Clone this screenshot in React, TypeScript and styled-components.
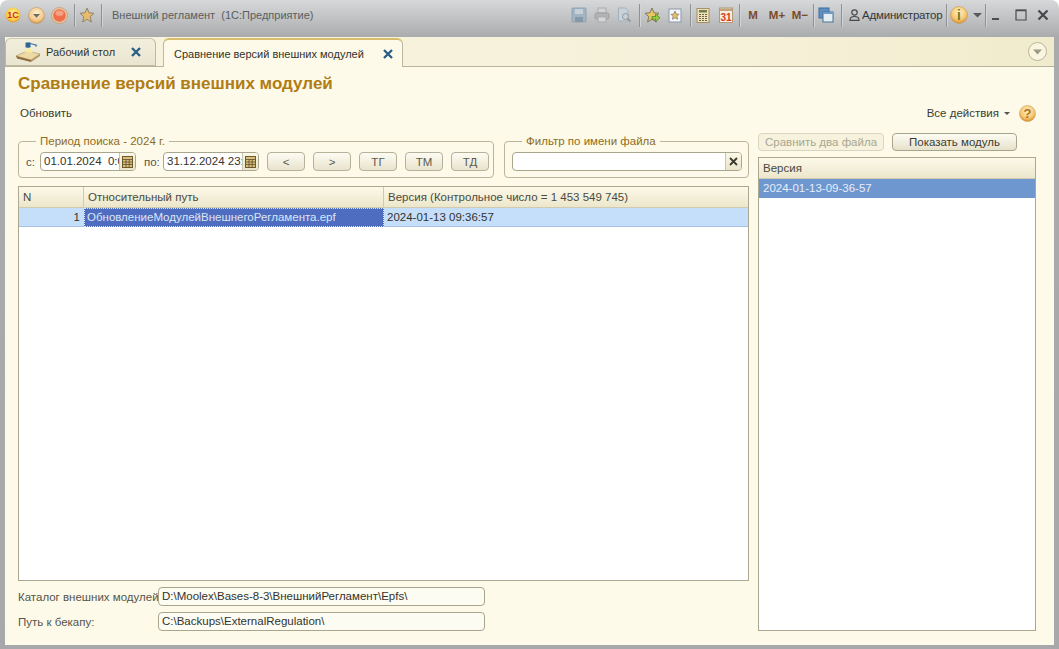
import styled, { createGlobalStyle } from "styled-components";

const GlobalStyle = createGlobalStyle`
  html, body {
    margin: 0;
    padding: 0;
    background: #ffffff;
  }
  * {
    box-sizing: border-box;
  }
`;

const Window = styled.div`
  width: 1059px;
  height: 649px;
  display: flex;
  flex-direction: column;
  overflow: hidden;
  border-radius: 8px 8px 0 0;
  font-family: "Liberation Sans", Arial, sans-serif;
  font-size: 11.5px;
  color: #3c3c34;
  background: linear-gradient(180deg, #d6d8d9 0, #c3c5c7 16px, #a9abad 37px, #a6a8aa 100%);
`;

const TitleBar = styled.div`
  height: 37px;
  flex: none;
  display: flex;
  align-items: center;
  padding-bottom: 7px;
`;

const Group = styled.div<{ $left?: number }>`
  display: flex;
  align-items: center;
  height: 30px;
  margin-left: ${(p) => p.$left ?? 0}px;
`;

const Slot = styled.div<{ $w: number; $left?: number }>`
  width: ${(p) => p.$w}px;
  margin-left: ${(p) => p.$left ?? 0}px;
  flex: none;
  display: flex;
  align-items: center;
  justify-content: center;
`;

const Sep = styled.div<{ $left: number }>`
  width: 1px;
  height: 23px;
  flex: none;
  margin-left: ${(p) => p.$left}px;
  background: #8f9294;
  box-shadow: 1px 0 0 #d2d4d5;
`;

const WindowTitle = styled.div`
  margin-left: 10px;
  color: #595e61;
  font-size: 11px;
  white-space: pre;
`;

const Memo = styled.div<{ $w: number }>`
  width: ${(p) => p.$w}px;
  flex: none;
  text-align: center;
  font-size: 11.5px;
  font-weight: 700;
  color: #7c4a28;
`;

const UserName = styled.div`
  width: 84px;
  flex: none;
  font-size: 11.5px;
  letter-spacing: -0.2px;
  color: #33373a;
`;

const Panel = styled.div`
  flex: 1;
  min-height: 0;
  margin: 0 5px 4px;
  display: flex;
  flex-direction: column;
  background: #fdfae9;
`;

const TabStrip = styled.div`
  height: 30px;
  flex: none;
  display: flex;
  align-items: flex-end;
  padding-left: 0;
  margin-top: 0;
  background: linear-gradient(90deg, #f8f3dd, #f6f1d9 70%, #f1ebcd);
  border-bottom: 1px solid #b8b39b;
  position: relative;
`;

const Tab = styled.div<{ $active?: boolean; $w: number; $left?: number }>`
  width: ${(p) => p.$w}px;
  height: ${(p) => (p.$active ? 29 : 28)}px;
  margin-left: ${(p) => p.$left ?? 0}px;
  margin-bottom: ${(p) => (p.$active ? -1 : 0)}px;
  flex: none;
  display: flex;
  align-items: center;
  border: 1px solid #bdb89f;
  border-bottom: ${(p) => (p.$active ? "none" : "1px solid #bdb89f")};
  border-top: ${(p) => (p.$active ? "2px solid #d8bd6d" : "1px solid #c9c5ae")};
  border-radius: 6px 6px 0 0;
  background: ${(p) => (p.$active ? "#fdfae9" : "linear-gradient(180deg, #f2efdd, #e9e5cf)")};
  color: #33332c;
  font-size: 11px;
`;

const TabLabel = styled.div<{ $left: number; $w: number }>`
  margin-left: ${(p) => p.$left}px;
  width: ${(p) => p.$w}px;
  white-space: nowrap;
`;

const StripMenu = styled.div`
  position: absolute;
  right: 7px;
  top: 5px;
  width: 19px;
  height: 19px;
  border-radius: 50%;
  border: 1px solid #b9b59d;
  background: #f9f5df;
  display: flex;
  align-items: center;
  justify-content: center;
`;

const Content = styled.div`
  flex: 1;
  min-height: 0;
  display: flex;
  flex-direction: column;
  padding: 8px 18px 14px 13px;
`;

const Heading = styled.h1`
  margin: 0;
  height: 18px;
  line-height: 18px;
  font-size: 17px;
  font-weight: 700;
  color: #b07c14;
  white-space: nowrap;
`;

const Toolbar = styled.div`
  height: 20px;
  margin-top: 10px;
  flex: none;
  display: flex;
  align-items: center;
  justify-content: space-between;
  padding-left: 2px;
`;

const ToolbarRight = styled.div`
  display: flex;
  align-items: center;
`;

const ActionsLabel = styled.div`
  color: #3c3c34;
`;

const Caret = styled.div`
  width: 0;
  height: 0;
  margin: 1px 0 0 5px;
  border-left: 3px solid transparent;
  border-right: 3px solid transparent;
  border-top: 3px solid #55554a;
`;

const HelpWrap = styled.div`
  margin-left: 9px;
  display: flex;
`;

const Body = styled.div`
  flex: 1;
  min-height: 0;
  margin-top: 10px;
  display: flex;
  gap: 9px;
`;

const LeftColumn = styled.div`
  width: 731px;
  flex: none;
  display: flex;
  flex-direction: column;
  padding-top: 2px;
`;

const RightColumn = styled.div`
  flex: 1;
  min-width: 0;
  display: flex;
  flex-direction: column;
`;

const FilterRow = styled.div`
  display: flex;
  gap: 10px;
  flex: none;
`;

const GroupBox = styled.fieldset<{ $w: number }>`
  width: ${(p) => p.$w}px;
  height: 43px;
  flex: none;
  margin: 0;
  padding: 0 7px;
  border: 1px solid #bab59d;
  border-radius: 4px;
  display: flex;
  align-items: center;
  min-inline-size: 0;
`;

const BoxTitle = styled.legend`
  margin-left: 10px;
  padding: 0 4px;
  line-height: 12px;
  font-size: 11.5px;
  color: #8d6c22;
`;

const FieldRow = styled.div`
  display: flex;
  align-items: center;
  margin-top: -1px;
`;

const FieldLabel = styled.span<{ $w: number }>`
  width: ${(p) => p.$w}px;
  flex: none;
  color: #55554a;
`;

const InputFrame = styled.div<{ $w: number }>`
  width: ${(p) => p.$w}px;
  height: 19px;
  flex: none;
  display: flex;
  border: 1px solid #aaa58d;
  border-radius: 4px;
  background: #ffffff;
  overflow: hidden;
`;

const InputText = styled.div`
  flex: 1;
  min-width: 0;
  padding-left: 3px;
  line-height: 17px;
  white-space: pre;
  overflow: hidden;
  color: #33332c;
`;

const InputButton = styled.div`
  width: 16px;
  flex: none;
  display: flex;
  align-items: center;
  justify-content: center;
  border-left: 1px solid #c9c4ab;
  background: linear-gradient(180deg, #fbf8e8, #e9e4ca);
`;

const SmallButton = styled.div<{ $left: number }>`
  width: 38px;
  height: 19px;
  flex: none;
  margin-left: ${(p) => p.$left}px;
  display: flex;
  align-items: center;
  justify-content: center;
  border: 1px solid #b6b199;
  border-radius: 4px;
  background: linear-gradient(180deg, #fdfcf3, #e8e3cd);
  color: #5a5a4e;
`;

const DataTable = styled.div`
  flex: 1;
  min-height: 0;
  margin-top: 8px;
  border: 1px solid #aca78f;
  background: #ffffff;
`;

const TableRow = styled.div`
  display: grid;
  grid-template-columns: 65px 300px 1fr;
`;

const HeadCell = styled.div`
  height: 21px;
  padding-left: 4px;
  line-height: 20px;
  background: linear-gradient(180deg, #fcf9e9, #ece6cb);
  border-bottom: 1px solid #cfcab0;
  border-right: 1px solid #cfcab0;
  color: #4a4a3e;
  white-space: nowrap;

  &:last-child {
    border-right: none;
  }
`;

const Cell = styled.div<{ $align?: string; $current?: boolean }>`
  height: 19px;
  padding: 0 4px 0 3px;
  line-height: 18px;
  text-align: ${(p) => p.$align ?? "left"};
  white-space: nowrap;
  background: ${(p) => (p.$current ? "#4e6cc0" : "#c5dffb")};
  color: ${(p) => (p.$current ? "#dce6f6" : "#33332c")};
  border-bottom: ${(p) => (p.$current ? "none" : "1px solid #a8c4e2")};
  outline: ${(p) => (p.$current ? "1px dotted #dfe8f8" : "none")};
  outline-offset: -1px;
`;

const PathRow = styled.div<{ $top: number }>`
  display: flex;
  align-items: center;
  flex: none;
  margin-top: ${(p) => p.$top}px;
`;

const PathLabel = styled.div`
  width: 140px;
  flex: none;
  color: #55554a;
  white-space: nowrap;
`;

const PathField = styled.div`
  width: 327px;
  height: 19px;
  flex: none;
  padding-left: 3px;
  line-height: 17px;
  border: 1px solid #aaa58d;
  border-radius: 4px;
  background: #fdfcf3;
  color: #33332c;
  white-space: nowrap;
`;

const ButtonRow = styled.div`
  display: flex;
  gap: 8px;
  flex: none;
`;

const ActionButton = styled.div<{ $disabled?: boolean }>`
  width: ${(p) => (p.$disabled ? 126 : 125)}px;
  height: 18px;
  display: flex;
  align-items: center;
  justify-content: center;
  border: 1px solid ${(p) => (p.$disabled ? "#d9d5bf" : "#a9a48c")};
  border-radius: 4px;
  background: ${(p) =>
    p.$disabled ? "#f6f2de" : "linear-gradient(180deg, #fdfcf3, #e6e1ca)"};
  color: ${(p) => (p.$disabled ? "#a9a78f" : "#3c3c34")};
`;

const VersionList = styled.div`
  flex: 1;
  min-height: 0;
  margin-top: 6px;
  border: 1px solid #aca78f;
  background: #ffffff;
`;

const ListHead = styled.div`
  height: 21px;
  padding-left: 4px;
  line-height: 20px;
  background: linear-gradient(180deg, #fcf9e9, #ece6cb);
  border-bottom: 1px solid #cfcab0;
  color: #4a4a3e;
`;

const ListItem = styled.div`
  height: 19px;
  padding-left: 4px;
  line-height: 18px;
  background: #6f97cf;
  color: #e6eef9;
`;

const STAR = "8,1 10,5.8 15,6.3 11.2,9.7 12.4,15 8,12.2 3.6,15 4.8,9.7 1,6.3 6,5.8";

function Logo1C() {
  return (
    <svg width="16" height="16" viewBox="0 0 16 16">
      <defs>
        <radialGradient id="logoFill" cx="0.5" cy="0.4" r="0.6">
          <stop offset="0" stopColor="#fff3a0" />
          <stop offset="0.7" stopColor="#f8cf45" />
          <stop offset="1" stopColor="#e8953a" />
        </radialGradient>
      </defs>
      <circle cx="8" cy="8" r="7.5" fill="url(#logoFill)" />
      <text x="8" y="11" textAnchor="middle" fontSize="9" fontWeight="700" fill="#d42a1a" fontFamily="Liberation Sans">
        1С
      </text>
    </svg>
  );
}

function MenuCircle() {
  return (
    <svg width="17" height="17" viewBox="0 0 17 17">
      <defs>
        <radialGradient id="menuFill" cx="0.5" cy="0.35" r="0.65">
          <stop offset="0" stopColor="#fdf0cf" />
          <stop offset="0.7" stopColor="#f3c98b" />
          <stop offset="1" stopColor="#d2933f" />
        </radialGradient>
      </defs>
      <circle cx="8.5" cy="8.5" r="8" fill="url(#menuFill)" stroke="#b99566" strokeWidth="0.6" />
      <path d="M5 7h7l-3.500 3.800z" fill="#6f6a5e" />
    </svg>
  );
}

function RedCircle() {
  return (
    <svg width="17" height="17" viewBox="0 0 17 17">
      <circle cx="8.5" cy="8.5" r="8" fill="#e9c39d" stroke="#b99566" strokeWidth="0.6" />
      <circle cx="8.5" cy="8.5" r="6.2" fill="#ef6f4c" />
      <ellipse cx="8.5" cy="6.2" rx="4" ry="2.6" fill="#f6a184" />
    </svg>
  );
}

function FavStar() {
  return (
    <svg width="16" height="16" viewBox="0 0 16 16">
      <polygon points={STAR} fill="#eabb6a" stroke="#8e8571" strokeWidth="1" />
    </svg>
  );
}

function CloseX({ size = 12 }: { size?: number }) {
  return (
    <svg width={size} height={size} viewBox="0 0 12 12">
      <path d="M2 2l8 8M10 2l-8 8" stroke="#275d86" strokeWidth="2.300" fill="none" />
    </svg>
  );
}

function DeskIcon() {
  return (
    <svg width="26" height="22" viewBox="0 0 26 22">
      <path d="M1 15l11-5 13 3-9 6z" fill="#ecd9a6" stroke="#a98f5e" strokeWidth="0.6" />
      <path d="M1 15l15 4v2L2 17.500z" fill="#8e6b3a" />
      <path d="M16 19l9-6v2l-9 6z" fill="#b89565" />
      <path d="M9 11l3-4h3l3 5z" fill="#f6ee9a" opacity="0.9" />
      <path d="M13 7V2M13 2l8 2" stroke="#3e6f9e" strokeWidth="1.200" fill="none" />
      <path d="M10.500 1.500h5v5h-5z" fill="#2f6599" />
      <circle cx="21" cy="4.500" r="1.200" fill="#6b93b8" />
    </svg>
  );
}

function SaveIcon() {
  return (
    <svg width="16" height="16" viewBox="0 0 16 16">
      <rect x="1" y="1" width="14" height="14" rx="1" fill="#a3b4c2" stroke="#8fa2b2" />
      <rect x="4" y="2" width="8" height="5" fill="#c6d0d8" />
      <rect x="4" y="10" width="8" height="5" fill="#8599a9" />
    </svg>
  );
}

function PrintIcon() {
  return (
    <svg width="16" height="16" viewBox="0 0 16 16">
      <rect x="4" y="1" width="8" height="5" fill="#d2d3d3" stroke="#a9adaf" />
      <rect x="1" y="6" width="14" height="6" rx="1.500" fill="#b3b3b1" stroke="#9c9fa0" />
      <rect x="4" y="10" width="8" height="5" fill="#d6d6d4" stroke="#a9adaf" />
    </svg>
  );
}

function PreviewIcon() {
  return (
    <svg width="16" height="16" viewBox="0 0 16 16">
      <path d="M2.500 1h7l2.500 2.500V14h-9.500z" fill="#c9d2d8" stroke="#a2b1bc" />
      <circle cx="9.500" cy="9.500" r="3" fill="#c7ced2" stroke="#8f9ca5" />
      <path d="M11.500 11.500l3 3" stroke="#8a8f92" strokeWidth="1.500" />
    </svg>
  );
}

function StarArrow() {
  return (
    <svg width="17" height="16" viewBox="0 0 17 16">
      <polygon points={STAR} fill="#eac466" stroke="#7e7a5c" strokeWidth="1" />
      <path d="M8 9.500h3.500V7l4.500 3.800-4.500 3.800v-2.500H8z" fill="#8fd13c" stroke="#4d7f25" strokeWidth="0.700" />
    </svg>
  );
}

function StarDoc() {
  return (
    <svg width="14" height="15" viewBox="0 0 14 15">
      <rect x="1" y="1" width="12" height="13" fill="#f4f6f8" stroke="#8a9aa8" />
      <polygon points="7,3 8.200,6 11,6.300 9,8.300 9.600,11.300 7,9.800 4.400,11.300 5,8.300 3,6.300 5.800,6" fill="#e6bd6b" stroke="#7d7a6a" strokeWidth="0.700" />
    </svg>
  );
}

function CalcIcon() {
  return (
    <svg width="14" height="15" viewBox="0 0 14 15">
      <rect x="1" y="0.500" width="12" height="14" fill="#efe2bd" stroke="#a68f63" />
      <rect x="3" y="2" width="8" height="2.500" fill="#6d7f4b" />
      <path d="M3 6.500h8M3 8.500h8M3 10.500h8M3 12.500h8" stroke="#6f6542" strokeDasharray="2 1" strokeWidth="1.200" />
    </svg>
  );
}

function CalendarIcon() {
  return (
    <svg width="14" height="16" viewBox="0 0 14 16">
      <rect x="0.500" y="1" width="13" height="14.500" fill="#f7eedd" stroke="#b09a78" />
      <rect x="1" y="1.500" width="12" height="2.500" fill="#c2a27a" />
      <text x="7" y="13.500" textAnchor="middle" fontSize="10" fontWeight="700" fill="#d43c24" fontFamily="Liberation Sans">
        31
      </text>
    </svg>
  );
}

function WindowsIcon() {
  return (
    <svg width="16" height="16" viewBox="0 0 16 16">
      <rect x="1" y="1" width="10" height="10" fill="#5f8fc2" stroke="#3f6f9f" />
      <rect x="5" y="5" width="10" height="10" fill="#e4edf4" stroke="#49708f" />
      <rect x="5" y="5" width="10" height="2" fill="#6f9ac6" />
    </svg>
  );
}

function UserIcon() {
  return (
    <svg width="11" height="12" viewBox="0 0 11 12">
      <circle cx="5.500" cy="3.500" r="2.700" fill="none" stroke="#45494c" strokeWidth="1.200" />
      <path d="M1 11.300c0-3 2-3.800 4.500-3.800s4.500.8 4.500 3.800z" fill="none" stroke="#45494c" strokeWidth="1.200" />
    </svg>
  );
}

function OrangeBadge({ mark, size, color }: { mark: string; size: number; color: string }) {
  return (
    <svg width={size} height={size} viewBox="0 0 17 17">
      <defs>
        <radialGradient id={`badge${mark === "i" ? "I" : "Q"}`} cx="0.5" cy="0.35" r="0.65">
          <stop offset="0" stopColor="#fff0c4" />
          <stop offset="0.65" stopColor="#f7c873" />
          <stop offset="1" stopColor="#d98e2d" />
        </radialGradient>
      </defs>
      <circle cx="8.500" cy="8.500" r="8" fill={`url(#badge${mark === "i" ? "I" : "Q"})`} stroke="#c79c5a" strokeWidth="0.600" />
      <text x="8.500" y="13" textAnchor="middle" fontSize="13" fontWeight="700" fill={color} fontFamily="Liberation Sans">
        {mark}
      </text>
    </svg>
  );
}

function SmallArrow() {
  return (
    <svg width="9" height="5" viewBox="0 0 9 5">
      <path d="M0 0h9L4.500 4.500z" fill="#565a5c" />
    </svg>
  );
}

function MinimizeIcon() {
  return (
    <svg width="12" height="12" viewBox="0 0 12 12">
      <rect x="2" y="9" width="7" height="2" fill="#4a4e51" />
    </svg>
  );
}

function MaximizeIcon() {
  return (
    <svg width="12" height="12" viewBox="0 0 12 12">
      <path d="M1 1h10v10H1z" fill="none" stroke="#4a4e51" strokeWidth="1.200" />
      <path d="M1 1.500h10" stroke="#4a4e51" strokeWidth="1.600" />
    </svg>
  );
}

function WindowCloseIcon() {
  return (
    <svg width="12" height="12" viewBox="0 0 12 12">
      <path d="M1.500 1.500l9 9M10.500 1.500l-9 9" stroke="#44484b" strokeWidth="2.200" />
    </svg>
  );
}

function DateGrid() {
  return (
    <svg width="11" height="12" viewBox="0 0 11 12">
      <rect x="0.500" y="0.500" width="10" height="11" fill="#d9bf7f" stroke="#6e5a2a" />
      <path d="M0.500 3.500h10M0.500 6h10M0.500 8.500h10M4 3.500v8M7.200 3.500v8" stroke="#5f4e26" strokeWidth="0.800" />
    </svg>
  );
}

function ClearX() {
  return (
    <svg width="9" height="9" viewBox="0 0 9 9">
      <path d="M1 1l7 7M8 1l-7 7" stroke="#3d3a2c" strokeWidth="1.800" />
    </svg>
  );
}

function TriangleDown() {
  return (
    <svg width="9" height="6" viewBox="0 0 9 6">
      <path d="M0 0.500h9L4.500 5.500z" fill="#9d9a86" />
    </svg>
  );
}

export default function App() {
  return (
    <>
      <GlobalStyle />
      <Window>
        <TitleBar>
          <Group $left={5}>
            <Slot $w={16}>
              <Logo1C />
            </Slot>
            <Slot $w={17} $left={7}>
              <MenuCircle />
            </Slot>
            <Slot $w={17} $left={6}>
              <RedCircle />
            </Slot>
            <Sep $left={6} />
            <Slot $w={16} $left={4}>
              <FavStar />
            </Slot>
            <Sep $left={6} />
            <WindowTitle>Внешний регламент  (1С:Предприятие)</WindowTitle>
          </Group>
          <Group style={{ marginLeft: "auto" }}>
            <Slot $w={22}>
              <SaveIcon />
            </Slot>
            <Slot $w={23}>
              <PrintIcon />
            </Slot>
            <Slot $w={22}>
              <PreviewIcon />
            </Slot>
            <Sep $left={4} />
            <Slot $w={22} $left={1}>
              <StarArrow />
            </Slot>
            <Slot $w={23}>
              <StarDoc />
            </Slot>
            <Sep $left={4} />
            <Slot $w={22} $left={1}>
              <CalcIcon />
            </Slot>
            <Slot $w={23}>
              <CalendarIcon />
            </Slot>
            <Sep $left={2} />
            <Memo $w={24} style={{ marginLeft: 1 }}>
              M
            </Memo>
            <Memo $w={24}>M+</Memo>
            <Memo $w={22}>M−</Memo>
            <Sep $left={2} />
            <Slot $w={22} $left={1}>
              <WindowsIcon />
            </Slot>
            <Sep $left={4} />
            <Slot $w={16} $left={4}>
              <UserIcon />
            </Slot>
            <UserName>Администратор</UserName>
            <Sep $left={0} />
            <Slot $w={22} $left={1}>
              <OrangeBadge mark="i" size={18} color="#6d7a1f" />
            </Slot>
            <Slot $w={14}>
              <SmallArrow />
            </Slot>
            <Sep $left={1} />
            <Slot $w={20}>
              <MinimizeIcon />
            </Slot>
            <Slot $w={20} $left={5}>
              <MaximizeIcon />
            </Slot>
            <Slot $w={20} $left={2} style={{ marginRight: 6 }}>
              <WindowCloseIcon />
            </Slot>
          </Group>
        </TitleBar>
        <Panel>
          <TabStrip>
            <Tab $w={151}>
              <Slot $w={26} $left={9}>
                <DeskIcon />
              </Slot>
              <TabLabel $left={5} $w={84}>
                Рабочий стол
              </TabLabel>
              <CloseX />
            </Tab>
            <Tab $active $w={240} $left={7}>
              <TabLabel $left={10} $w={208}>
                Сравнение версий внешних модулей
              </TabLabel>
              <CloseX />
            </Tab>
            <StripMenu>
              <TriangleDown />
            </StripMenu>
          </TabStrip>
          <Content>
            <Heading>Сравнение версий внешних модулей</Heading>
            <Toolbar>
              <div>Обновить</div>
              <ToolbarRight>
                <ActionsLabel>Все действия</ActionsLabel>
                <Caret />
                <HelpWrap>
                  <OrangeBadge mark="?" size={17} color="#a9701f" />
                </HelpWrap>
              </ToolbarRight>
            </Toolbar>
            <Body>
              <LeftColumn>
                <FilterRow>
                  <GroupBox $w={476}>
                    <BoxTitle>Период поиска - 2024 г.</BoxTitle>
                    <FieldRow>
                      <FieldLabel $w={14}>с:</FieldLabel>
                      <InputFrame $w={96}>
                        <InputText>01.01.2024  0:00:00</InputText>
                        <InputButton>
                          <DateGrid />
                        </InputButton>
                      </InputFrame>
                      <FieldLabel $w={19} style={{ marginLeft: 8 }}>
                        по:
                      </FieldLabel>
                      <InputFrame $w={96}>
                        <InputText>31.12.2024 23:59:59</InputText>
                        <InputButton>
                          <DateGrid />
                        </InputButton>
                      </InputFrame>
                      <SmallButton $left={8}>&lt;</SmallButton>
                      <SmallButton $left={8}>&gt;</SmallButton>
                      <SmallButton $left={8}>ТГ</SmallButton>
                      <SmallButton $left={8}>ТМ</SmallButton>
                      <SmallButton $left={8}>ТД</SmallButton>
                    </FieldRow>
                  </GroupBox>
                  <GroupBox $w={245}>
                    <BoxTitle>Фильтр по имени файла</BoxTitle>
                    <FieldRow>
                      <InputFrame $w={230}>
                        <InputText />
                        <InputButton>
                          <ClearX />
                        </InputButton>
                      </InputFrame>
                    </FieldRow>
                  </GroupBox>
                </FilterRow>
                <DataTable>
                  <TableRow>
                    <HeadCell>N</HeadCell>
                    <HeadCell>Относительный путь</HeadCell>
                    <HeadCell>Версия (Контрольное число = 1 453 549 745)</HeadCell>
                  </TableRow>
                  <TableRow>
                    <Cell $align="right">1</Cell>
                    <Cell $current>ОбновлениеМодулейВнешнегоРегламента.epf</Cell>
                    <Cell>2024-01-13 09:36:57</Cell>
                  </TableRow>
                </DataTable>
                <PathRow $top={6}>
                  <PathLabel>Каталог внешних модулей:</PathLabel>
                  <PathField>D:\Moolex\Bases-8-3\ВнешнийРегламент\Epfs\</PathField>
                </PathRow>
                <PathRow $top={6}>
                  <PathLabel>Путь к бекапу:</PathLabel>
                  <PathField>C:\Backups\ExternalRegulation\</PathField>
                </PathRow>
              </LeftColumn>
              <RightColumn>
                <ButtonRow>
                  <ActionButton $disabled>Сравнить два файла</ActionButton>
                  <ActionButton>Показать модуль</ActionButton>
                </ButtonRow>
                <VersionList>
                  <ListHead>Версия</ListHead>
                  <ListItem>2024-01-13-09-36-57</ListItem>
                </VersionList>
              </RightColumn>
            </Body>
          </Content>
        </Panel>
      </Window>
    </>
  );
}
